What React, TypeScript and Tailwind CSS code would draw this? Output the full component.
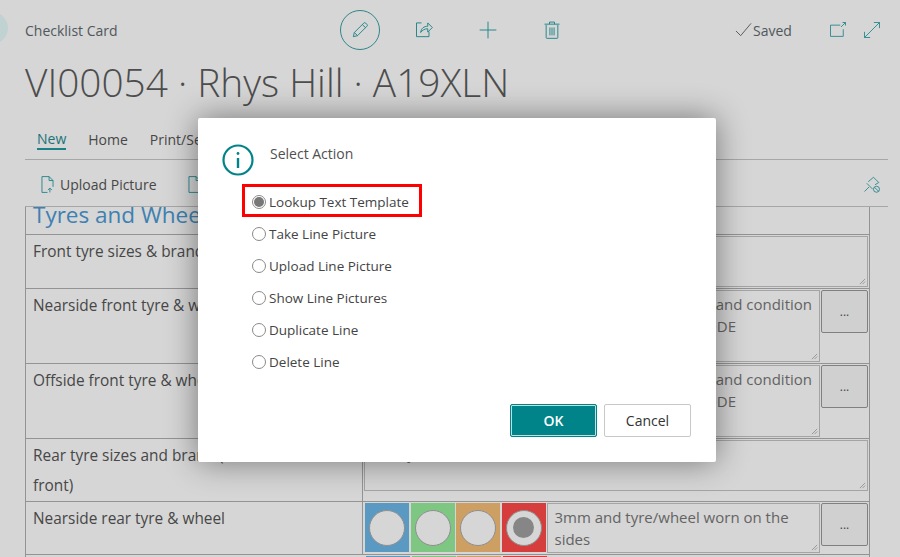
import React from 'react';

const font = { fontFamily: '"Open Sans", "Noto Sans", sans-serif' };

function Icon({ children, className }: { children: React.ReactNode; className?: string }) {
    return (
        <svg viewBox="0 0 24 24" fill="none" stroke="#1f9aa0" strokeWidth="1.1" className={className}>
            {children}
        </svg>
    );
}

function TopBar() {
    return (
        <div className="flex h-[60px] items-center pl-[25px]">
            <span className="w-[315px] text-[14px] text-[#5f6a6f]">Checklist Card</span>
            {/* Edit, share, add, delete */}
            <div className="flex h-[40px] w-[40px] items-center justify-center rounded-full border border-[#3aa0a4]">
                <Icon className="h-[20px] w-[20px]">
                    <path d="M4 20l1.2-5L16.5 3.7a1.6 1.6 0 0 1 2.3 0l1.5 1.5a1.6 1.6 0 0 1 0 2.3L9 18.8 4 20zM5.2 15l3.8 3.8M14.8 5.4l3.8 3.800" />
                </Icon>
            </div>
            <Icon className="ml-[34px] h-[20px] w-[20px]">
                <path d="M9 3.500H3v16.500h15v-6M8 15c.5-5 4-7.500 8.500-7.500V3.500L22 9l-5.500 5.500V10.500C13 10.500 10 12 8 15z" />
            </Icon>
            <Icon className="ml-[44px] h-[20px] w-[20px]">
                <path d="M12 2v20M2 12h20" />
            </Icon>
            <Icon className="ml-[44px] h-[20px] w-[20px]">
                <path d="M5 6v15a1 1 0 0 0 1 1h12a1 1 0 0 0 1-1V6M3 5h18M9 5V2.500h6V5M9.500 9v9.500M12 9v9.500M14.500 9v9.500" />
            </Icon>
            <svg viewBox="0 0 18 16" fill="none" stroke="#5f6a6f" strokeWidth="1" className="ml-[173px] h-[16px] w-[17px]">
                <path d="M1 9l5 5L17 1" />
            </svg>
            <span className="ml-px w-[46px] text-[14px] text-[#5f6a6f]">Saved</span>
            <Icon className="ml-[30px] h-[18px] w-[18px]">
                <path d="M15 5.500H2v15h17V11M16 8l6-6M18 2h4v4" />
            </Icon>
            <Icon className="ml-[16px] h-[18px] w-[18px]">
                <path d="M2 22L22 2M14.500 2H22v7.500M2 14.500V22h7.500" />
            </Icon>
        </div>
    );
}

function ActionBar() {
    return (
        <>
            <div className="flex h-[56px] items-end gap-[22px] border-b border-[#c8c8c8] pb-[9px] pl-[12px] text-[14px] text-[#555]">
                <span className="border-b-2 border-[#1f9aa0] leading-[18px] text-[#1f8a90]">New</span>
                <span className="leading-[20px]">Home</span>
                <span className="leading-[20px]">Print/Send</span>
            </div>
            <div className="flex h-[47px] items-center border-b border-[#c8c8c8] pl-[13px] pt-[2px] text-[14px] text-[#555]">
                <Icon className="h-[19px] w-[19px]">
                    <path d="M5 22V2h9l5 5v8M14 2v5h5M5 22h7M15 22v-5M12.500 19l2.500-2.500 2.500 2.500" />
                </Icon>
                <span className="ml-[3px]">Upload Picture</span>
                <Icon className="ml-[28px] h-[19px] w-[19px]">
                    <path d="M5 22V2h9l5 5v15zM14 2v5h5" />
                </Icon>
                <Icon className="ml-auto mr-[7px] h-[18px] w-[18px]">
                    <path d="M2 22l6-6M5 11l8 8M7 9l7-6 7 7-5 3M14 19a4 4 0 1 0 8 0 4 4 0 0 0-8 0zM15.500 16.500l5 5" />
                </Icon>
            </div>
        </>
    );
}

function Field({ lines, className }: { lines: React.ReactNode; className?: string }) {
    return (
        <div className={`relative border border-[#c4c4c4] px-[7px] text-[15px] leading-[22px] text-[#777] ${className ?? ''}`}>
            {lines}
            <svg viewBox="0 0 8 8" stroke="#888" strokeWidth="0.7" className="absolute bottom-px right-px h-[7px] w-[7px]">
                <path d="M1 7l6-6M4 7l3-3" />
            </svg>
        </div>
    );
}

function MoreButton({ className }: { className?: string }) {
    return (
        <div className={`ml-px flex h-[43px] w-[47px] items-center justify-center rounded-[2px] border border-[#999] bg-[#f8f8f8] text-[12px] text-[#555] ${className ?? ''}`}>
            ...
        </div>
    );
}

function Swatch({ color, selected }: { color: string; selected?: boolean }) {
    return (
        <div className={`flex h-[49px] w-[44px] items-center justify-center ${color}`}>
            <div className="flex h-[36px] w-[36px] items-center justify-center rounded-full border border-[#aaa] bg-white">
                {selected && <div className="h-[21px] w-[21px] rounded-full bg-[#a0a0a0]" />}
            </div>
        </div>
    );
}

function Swatches() {
    return (
        <div className="ml-px flex gap-[1.500px]">
            <Swatch color="bg-[#6cb7e7]" />
            <Swatch color="bg-[#97ed9d]" />
            <Swatch color="bg-[#f6be75]" />
            <Swatch color="bg-[#ff4949]" selected />
        </div>
    );
}

function Row({ label, height, children }: { label: React.ReactNode; height: string; children: React.ReactNode }) {
    return (
        <div className={`grid grid-cols-[337px_1fr] border-b border-[#b0b0b0] ${height}`}>
            <div className="border-r border-[#b0b0b0] px-[7px] pt-[2px] text-[15.400px] leading-[30px] text-[#555]">{label}</div>
            <div className="flex p-px">{children}</div>
        </div>
    );
}

function ChecklistTable() {
    const condition = (
        <>
            <div className="text-right">Tread depth and condition</div>
            <div className="pr-[76px] text-right">MODE</div>
        </>
    );
    return (
        <div className="ml-[25px] w-[845px] border-x border-[#b0b0b0]">
            <div className="h-[28px] overflow-hidden border-b border-[#b0b0b0] px-[7px]">
                <div className="-mt-[7px] text-[22.500px] leading-[30px] text-[#4a9ad4]">Tyres and Wheels</div>
            </div>
            <Row label="Front tyre sizes & brand" height="h-[54px]">
                <Field lines="" className="flex-1" />
            </Row>
            <Row label="Nearside front tyre & wheel" height="h-[75px]">
                <Field lines={condition} className="flex-1 pt-[2px]" />
                <MoreButton />
            </Row>
            <Row label="Offside front tyre & wheel" height="h-[75px]">
                <Field lines={condition} className="flex-1 pt-[2px]" />
                <MoreButton />
            </Row>
            <Row label={<>Rear tyre sizes and brand (if different to<br />front)</>} height="h-[63px]">
                <Field lines="The tyre sizes and brands (front to the rear)" className="mb-[9px] flex-1 pt-px" />
            </Row>
            <Row label="Nearside rear tyre & wheel" height="h-[53px]">
                <Swatches />
                <Field lines="3mm and tyre/wheel worn on the sides" className="ml-px flex-1 pt-[2px]" />
                <MoreButton />
            </Row>
            <div className="flex pl-[339px] pt-px">
                <Swatches />
            </div>
        </div>
    );
}

function RadioOption({ label, selected }: { label: string; selected?: boolean }) {
    return (
        <div className="flex h-[32px] items-center">
            <div className="flex h-[14px] w-[14px] items-center justify-center rounded-full border border-[#8a8a8a]">
                {selected && <div className="h-[10px] w-[10px] rounded-full bg-[#777]" />}
            </div>
            <span className="ml-[3px] text-[13.500px] text-[#444]">{label}</span>
        </div>
    );
}

function ActionDialog() {
    return (
        <div className="absolute left-[198px] top-[118px] h-[344px] w-[518px] rounded-[2px] bg-white pl-[24px] pr-[25px] pt-[26px] shadow-[0_0_32px_rgba(0,0,0,0.45)]">
            <div className="flex">
                <svg viewBox="0 0 32 32" fill="none" stroke="#008489" className="h-[32px] w-[32px]">
                    <circle cx="16" cy="16" r="14.500" strokeWidth="2.200" />
                    <path d="M16 14v10" strokeWidth="2.400" />
                    <circle cx="16" cy="9.500" r="1.400" fill="#008489" stroke="none" />
                </svg>
                <span className="ml-[16px] text-[14px] leading-[20px] text-[#505050]">Select Action</span>
            </div>
            <div className="relative ml-[30px] mt-[10px]">
                {/* Callout drawn on top of the first option */}
                <div className="absolute -left-[10px] -top-[2px] h-[33px] w-[180px] border-[3px] border-[#ff0000]" />
                <RadioOption label="Lookup Text Template" selected />
                <RadioOption label="Take Line Picture" />
                <RadioOption label="Upload Line Picture" />
                <RadioOption label="Show Line Pictures" />
                <RadioOption label="Duplicate Line" />
                <RadioOption label="Delete Line" />
            </div>
            <div className="mt-[26px] flex justify-end gap-[7px]">
                <button className="h-[33px] w-[87px] rounded-[2px] border border-[#008489] bg-[#008489] text-[14px] font-semibold text-white outline outline-1 -outline-offset-2 outline-[#bfe0e1]">
                    OK
                </button>
                <button className="h-[33px] w-[87px] rounded-[2px] border border-[#c8c8c8] bg-white text-[14px] font-medium text-[#333]">
                    Cancel
                </button>
            </div>
        </div>
    );
}

export default function App() {
    return (
        <div className="relative h-[557px] w-[900px] overflow-hidden bg-white" style={font}>
            <div className="absolute -left-[24px] top-[12px] h-[32px] w-[32px] rounded-full bg-[#e6fbfb]" />
            <TopBar />
            <h1 className="h-[44px] pl-[25px] text-[38.800px] font-light leading-[44px] text-[#5c5c5c]">VI00054 · Rhys Hill · A19XLN</h1>
            <div className="ml-[25px] mr-[12px]">
                <ActionBar />
            </div>
            <ChecklistTable />
            <div className="absolute inset-0 bg-black/[0.16]" />
            <ActionDialog />
        </div>
    );
}
